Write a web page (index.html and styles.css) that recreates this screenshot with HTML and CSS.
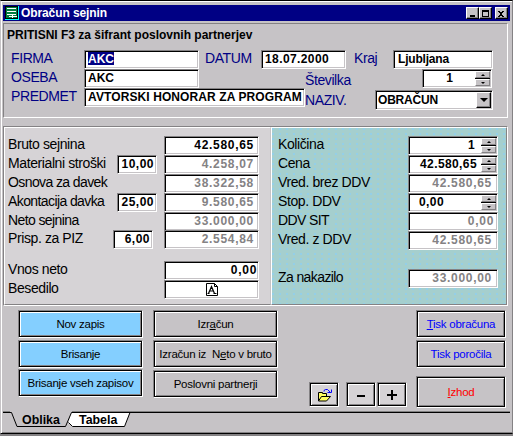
FILE: index.html
```html
<!DOCTYPE html>
<html lang="sl">
<head>
<meta charset="utf-8">
<title>Obračun sejnin</title>
<link rel="stylesheet" href="styles.css">
</head>
<body>
<div class="window">
  <header class="titlebar">
    <svg class="app-icon" width="14" height="14" viewBox="0 0 14 14" shape-rendering="crispEdges"><path fill="#00ffff" d="M0 0h14v14H0z"/><path fill="#000" d="M0 0h13v13H0z"/><path fill="#008040" d="M1 1h11v11H1z"/><path fill="#fff" d="M2 2h9v1H2zM2 5h9v1H2zM2 8h9v1H2zM4 10h8v1H4zM7 9h1v3H7z"/></svg>
    <h1>Obračun sejnin</h1>
    <div class="win-buttons">
      <button class="win-btn"><svg width="11" height="9" viewBox="0 0 11 9" shape-rendering="crispEdges"><path d="M3 6h5v2H3z"/></svg></button>
      <button class="win-btn"><svg width="11" height="9" viewBox="0 0 11 9" shape-rendering="crispEdges"><path fill-rule="evenodd" d="M2 1h7v7H2zM3 3h5v4H3z"/></svg></button>
      <button class="win-btn close"><svg width="11" height="9" viewBox="0 0 11 9" shape-rendering="crispEdges"><path d="M2 2h2v1h2V2h2v1H7v1H6v2h1v1h1v1H6V7H4v1H2V7h1V6h1V4H3V3H2z"/></svg></button>
    </div>
  </header>

  <section class="head-panel">
    <p class="hint">PRITISNI F3 za šifrant poslovnih partnerjev</p>
    <div class="head-row">
      <label class="w-key">FIRMA</label><div class="field w-firm"><mark>AKC</mark></div>
      <label class="w-date">DATUM</label><div class="field w-datefield">18.07.2000</div>
      <label class="w-city">Kraj</label><div class="field w-cityfield">Ljubljana</div>
    </div>
    <div class="head-split">
      <div class="head-left">
        <div class="head-row"><label class="w-key">OSEBA</label><div class="field w-firm">AKC</div></div>
        <div class="head-row"><label class="w-key">PREDMET</label><div class="field w-subject">AVTORSKI HONORAR ZA PROGRAM</div></div>
      </div>
      <div class="head-right">
        <div class="number-row"><label>Številka</label><div class="field spin w-number"><span>1</span><i class="spinner"><b class="up"></b><b class="down"></b></i></div></div>
        <div class="type-row"><label>NAZIV.</label><div class="field combo"><span>OBRAČUN</span><i class="drop"></i></div></div>
      </div>
    </div>
  </section>

  <main class="panels">
    <section class="left-panel">
      <div class="row"><label>Bruto sejnina</label><div class="field amount">42.580,65</div></div>
      <div class="row"><label>Materialni stroški</label><div class="field rate">10,00</div><div class="field amount off">4.258,07</div></div>
      <div class="row"><label class="narrow">Osnova za davek</label><div class="field amount off">38.322,58</div></div>
      <div class="row"><label class="narrow">Akontacija davka</label><div class="field rate">25,00</div><div class="field amount off">9.580,65</div></div>
      <div class="row short"><label class="narrow">Neto sejnina</label><div class="field amount off">33.000,00</div></div>
      <div class="row"><label>Prisp. za PIZ</label><div class="field rate shifted">6,00</div><div class="field amount off">2.554,84</div></div>
      <div class="row spaced"><label>Vnos neto</label><div class="field amount tight">0,00</div></div>
      <div class="row"><label>Besedilo</label><div class="field amount memo"><svg width="12" height="13" viewBox="0 0 12 13" fill="none" stroke="#000"><path d="M.5.5h8l3 3v9H.5zM8.500.5v3h3"/><path stroke-width="1.200" d="M2.500 10.500l3-7 3 7M3.500 8h4M1.500 10.500h2M7.500 10.500h3"/></svg></div></div>
    </section>
    <section class="right-panel">
      <div class="row"><label>Količina</label><div class="field spin total"><span class="unit">1</span><i class="spinner"><b class="up"></b><b class="down"></b></i></div></div>
      <div class="row"><label>Cena</label><div class="field spin total"><span>42.580,65</span><i class="spinner"><b class="up"></b><b class="down"></b></i></div></div>
      <div class="row"><label>Vred. brez DDV</label><div class="field total off">42.580,65</div></div>
      <div class="row"><label>Stop. DDV</label><div class="field spin total start"><span>0,00</span><i class="spinner"><b class="up"></b><b class="down"></b></i></div></div>
      <div class="row"><label class="narrow">DDV SIT</label><div class="field total off vat">0,00</div></div>
      <div class="row"><label>Vred. z DDV</label><div class="field total off">42.580,65</div></div>
      <div class="row lastrow"><label class="narrow">Za nakazilo</label><div class="field total off">33.000,00</div></div>
    </section>
  </main>

  <section class="actions">
    <div class="col">
      <button class="btn blue"><span>Nov zapis</span></button>
      <button class="btn blue"><span>Brisanje</span></button>
      <button class="btn blue nudge"><span>Brisanje vseh zapisov</span></button>
    </div>
    <div class="col">
      <button class="btn"><span>Izr<u>a</u>čun</span></button>
      <button class="btn"><span>Izračun iz&nbsp; N<u>e</u>to v bruto</span></button>
      <button class="btn"><span>Poslovni partnerji</span></button>
    </div>
    <div class="tools">
      <button class="btn tool open"><svg width="15" height="14" viewBox="0 0 15 14"><path fill="none" stroke="#0000ff" d="M7 3.500V2.500l1.500-1h2l3 3M14.500 1.500v3h-4"/><path fill="#ffff60" stroke="#000" d="M1.500 13V4.500h4v1h4v3M1.500 13l3-4.500h9L9.500 13z"/></svg></button>
      <button class="btn tool"><svg width="10" height="10" viewBox="0 0 10 10"><path d="M1 5h8v2H1z"/></svg></button>
      <button class="btn tool"><svg width="10" height="10" viewBox="0 0 10 10"><path d="M0 4h4V0h2v4h4v2H6v4H4V6H0z"/></svg></button>
    </div>
    <div class="col right">
      <button class="btn print"><span><u>T</u>isk obračuna</span></button>
      <button class="btn print"><span>Tisk poročila</span></button>
      <button class="btn exit"><span><u>I</u>zhod</span></button>
    </div>
  </section>

  <nav class="tabs">
    <svg class="tab-shapes" width="507" height="18" viewBox="0 0 507 18"><path fill="#fff" d="M68 2H126.500L121.500 16H69.500L65.500 12z"/><path fill="none" stroke="#808080" d="M0 .5H7M69 .5H507"/><path fill="none" stroke="#000" d="M0 1.500H8.500L14 15.500H62.500L68.500 1.500H507M65.500 11.500L69.500 15.500H121.500L127 1.500"/></svg>
    <a class="tab active">Oblika</a><a class="tab">Tabela</a>
  </nav>
</div>
</body>
</html>
```
FILE: styles.css
```css
* { box-sizing: border-box; }
body {
  margin: 0;
  width: 513px;
  height: 436px;
  overflow: hidden;
  background: #848284;
  font: 14px/17px "Liberation Sans", Arial, sans-serif;
  color: #000;
}
h1, p { margin: 0; }
svg { display: block; flex: none; }
button { padding: 0; font: inherit; color: inherit; }
label { white-space: nowrap; flex: none; letter-spacing: -.4px; }

.window {
  height: 434px;
  padding: 3px 2px 0 2px;
  background: #c6c3c6;
  border-top: 1px solid #000;
  border-right: 1px solid #848284;
  border-bottom: 1px solid #000;
  border-left: 1px solid #c6c3c6;
  box-shadow: inset 1px 1px #fff, inset 0 -1px #848284;
}
.titlebar {
  display: flex;
  align-items: center;
  height: 16px;
  margin-top: 1px;
  padding: 0 2px;
  background: #000084;
  color: #fff;
}
.titlebar h1 { margin-left: 2px; font-size: 12px; line-height: 16px; letter-spacing: -.1px; }
.win-buttons { display: flex; margin-left: auto; }
.win-btn {
  width: 13px;
  height: 12px;
  background: #c6c3c6;
  border: 1px solid;
  border-color: #fff #000 #000 #fff;
  box-shadow: inset -1px -1px #848284;
}
.close { margin-left: 3px; }

.head-panel {
  width: 505px;
  height: 95px;
  margin-top: 2px;
  padding: 3px 0 0 3px;
  border: 1px solid;
  border-color: #848284 #fff #fff #848284;
}
.head-panel label { color: #000084; }
.hint { height: 23px; font-size: 12px; font-weight: bold; line-height: 17px; white-space: nowrap; }
.head-row { display: flex; height: 19px; padding-left: 4px; }
.head-split { display: flex; }
.head-left { width: 298px; }
.head-right { flex: 1; }
.w-key { width: 73px; }
.w-firm { width: 115px; }
.w-date { width: 62px; padding-left: 6px; }
.w-datefield { width: 85px; }
.w-city { width: 47px; padding-left: 8px; }
.w-subject { width: 221px; }
.number-row, .type-row { display: flex; justify-content: space-between; width: 188px; height: 20px; }
.number-row label { padding-top: 3px; }
.type-row label { padding-top: 3px; }

.field {
  flex: none;
  height: 19px;
  padding: 0 3px;
  background: #fff;
  border: 1px solid;
  border-color: #848284 #fff #fff #848284;
  box-shadow: inset 1px 1px #000, inset -1px -1px #c6c3c6;
  font-size: 12px;
  font-weight: bold;
  line-height: 16px;
  letter-spacing: 0;
  white-space: nowrap;
  overflow: hidden;
}
.w-datefield { letter-spacing: .4px; }
.w-subject { letter-spacing: .1px; }
.w-cityfield { width: 100px; padding-left: 4px; letter-spacing: -.2px; }
mark { display: inline-block; height: 13px; margin-top: 1px; line-height: 14px; color: #fff; background: #000084; }
.spin { display: flex; justify-content: flex-end; padding: 1px 1px 1px 3px; line-height: 15px; }
.spin span { margin-right: 4px; }
.spin .unit { margin-right: 6px; }
.spinner { display: flex; flex-direction: column; justify-content: space-between; width: 15px; height: 15px; background: #000; }
.spinner b {
  display: flex;
  align-items: center;
  justify-content: center;
  height: 7px;
  background: #c6c3c6;
  border: 1px solid;
  border-color: #fff #848284 #848284 #fff;
}
.spinner b::after { content: ""; border: solid transparent; border-width: 0 2px 2px; border-bottom-color: #000; }
.spinner .down::after { border-width: 2px 2px 0; border-top-color: #000; }
.w-number { width: 70px; margin-right: 1px; }
.w-number span { margin-right: 22px; }
.combo { display: flex; justify-content: space-between; width: 118px; height: 20px; margin-top: 1px; padding: 1px 1px 1px 2px; letter-spacing: -.2px; }
.drop {
  display: flex;
  align-items: center;
  justify-content: center;
  width: 15px;
  height: 16px;
  background: #c6c3c6;
  border: 1px solid;
  border-color: #fff #000 #000 #fff;
  box-shadow: inset -1px -1px #848284;
}
.drop::after { content: ""; border: solid transparent; border-width: 4px 4px 0; border-top-color: #000; }

.panels {
  display: flex;
  width: 505px;
  height: 180px;
  margin-top: 8px;
  border: 1px solid;
  border-color: #848284 #fff #fff #848284;
}
.left-panel, .right-panel { padding: 8px 0 0 3px; border: 1px solid; border-color: #fff #848284 #848284 #fff; }
.left-panel { width: 267px; background: #d6d3d6; border-right-color: #c6c3c6; }
.right-panel {
  width: 236px;
  padding-left: 6px;
  background: #a5cfce radial-gradient(circle at 1px 1px, #94cfe8 0 1px, transparent 1.1px) 0 0 / 7px 5px;
}
.row { display: flex; height: 19px; }
.row.short { height: 18px; }
.row.spaced { margin-top: 12px; }
.row.lastrow { margin-top: 19px; }
.narrow { letter-spacing: -.6px; }
.row .field { text-align: right; letter-spacing: .7px; padding-right: 4px; }
.row .tight { padding-right: 1px; }
.row .off { color: #848284; }
.row .amount { width: 95px; margin-left: auto; margin-right: 11px; }
.row .rate { width: 40px; padding: 0 2px 0 1px; margin-left: auto; margin-right: 7px; letter-spacing: .5px; }
.row .rate + .amount { margin-left: 0; }
.row .shifted { margin-right: 11px; }
.row .memo { display: flex; justify-content: center; padding: 2px 0 0; }
.row .total { width: 90px; margin-left: auto; margin-right: 8px; padding-right: 5px; }
.row .total.vat { padding-right: 3px; }
.row .total.spin { padding-right: 1px; letter-spacing: .4px; }
.row .start { justify-content: space-between; padding-left: 10px; }

.actions { display: flex; height: 105px; padding: 4px 0 0 15px; }
.col { display: flex; flex-direction: column; gap: 2px; width: 125px; margin-right: 10px; }
.btn {
  display: flex;
  align-items: center;
  justify-content: center;
  flex: none;
  width: 100%;
  height: 28px;
  background: #c6c3c6;
  border: 1px solid;
  border-color: #848284 #fff #fff #848284;
  box-shadow: inset 0 0 0 1px #000, inset 2px 2px #fff, inset -2px -2px #848284;
  font-size: 11.5px;
  letter-spacing: -.25px;
  white-space: nowrap;
}
.blue { background: #84cfff; }
.nudge { margin-top: -1px; }
.tools { display: flex; width: 98px; margin: 72px 9px 0 21px; }
.tool { width: 30px; height: 25px; margin-right: 1px; background: #d6d3d6; }
.open { margin-right: 7px; }
.right { width: 90px; margin: 0; }
.print { color: #0000ff; }
.exit { height: 32px; margin-top: 6px; color: #ff0000; }

.tabs { display: flex; position: relative; height: 20px; padding-left: 19px; }
.tab-shapes { position: absolute; left: 0; top: 0; }
.tab { position: relative; width: 57px; font-size: 12.4px; font-weight: bold; line-height: 18px; }
```
